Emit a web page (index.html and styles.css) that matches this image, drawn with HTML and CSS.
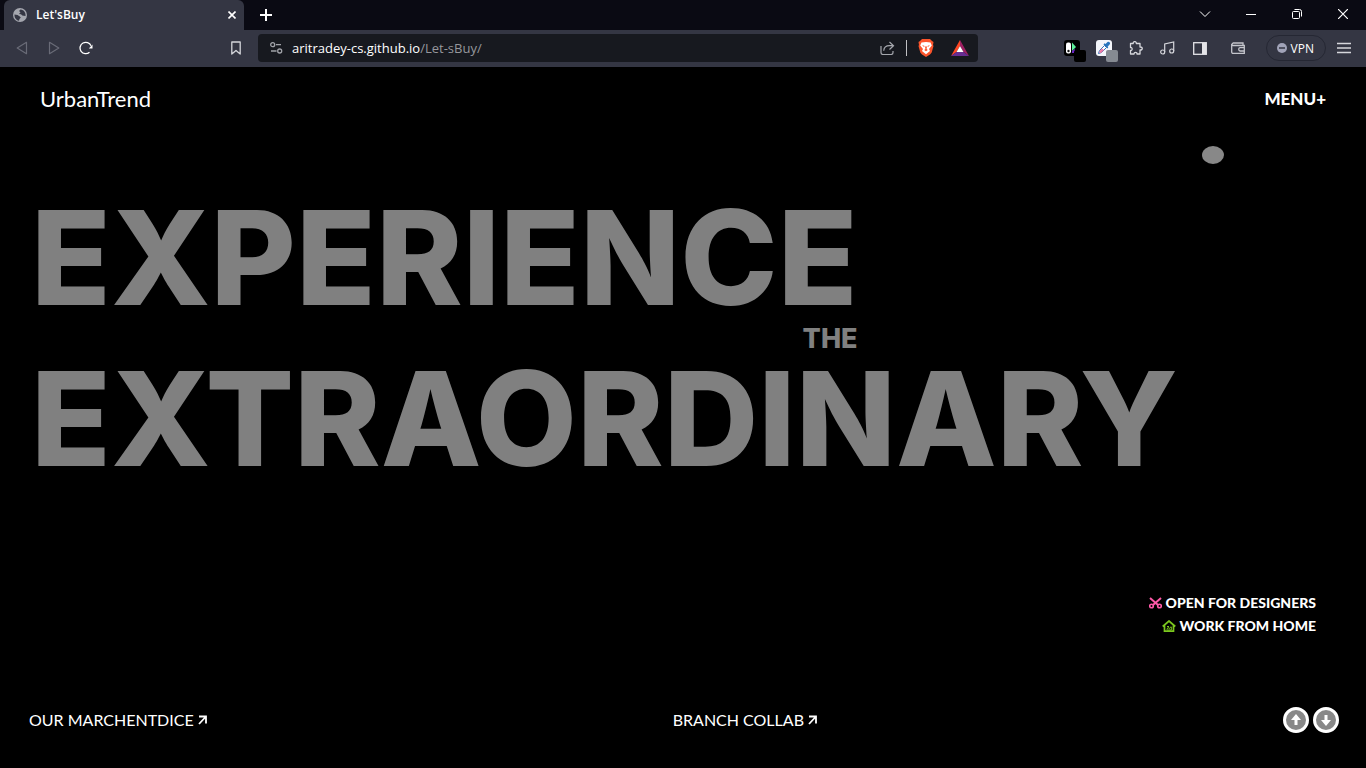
FILE: index.html
```html
<!DOCTYPE html>
<html lang="en">
<head>
<meta charset="utf-8">
<title>Let'sBuy</title>
<link rel="stylesheet" href="styles.css">
</head>
<body>
<div class="window">
  <header class="tabstrip">
    <div class="tab">
      <svg class="icon" width="14" height="14" viewBox="0 0 14 14"><circle cx="7" cy="7" r="7" fill="#a4a6ae"/><path d="M1.500 6.500 4.500 7l2 1.200 1.300 1.300L6.500 11l-.5 1.700C3 12.300 1.300 9.500 1.500 6.500zM7.500 1.500 6 3l1.500 1.300L6 6l2 .3 1.300 1.200L12.500 8c.5-3-1.500-6.300-5-6.500z" fill="#343643"/></svg>
      <span class="tab-title">Let'sBuy</span>
      <button class="icon-btn" aria-label="Close tab"><svg width="8" height="8" viewBox="0 0 8 8"><path d="M.5.5l7 7M7.500.5l-7 7" stroke="#fff" stroke-width="1.600"/></svg></button>
    </div>
    <button class="icon-btn new-tab" aria-label="New tab"><svg width="12" height="12" viewBox="0 0 12 12"><path d="M6 0v12M0 6h12" stroke="#fff" stroke-width="2"/></svg></button>
    <div class="window-controls">
      <button class="icon-btn" aria-label="Search tabs"><svg width="12" height="8" viewBox="0 0 12 8"><path d="M1 1.500l5 5 5-5" fill="none" stroke="#fff"/></svg></button>
      <button class="icon-btn" aria-label="Minimize"><svg width="10" height="10" viewBox="0 0 10 10"><path d="M0 5.500h10" stroke="#fff"/></svg></button>
      <button class="icon-btn" aria-label="Restore"><svg width="10" height="10" viewBox="0 0 10 10" fill="none" stroke="#fff"><rect x=".5" y="2.500" width="7" height="7" rx="1"/><path d="M2.500.5H7.500a2 2 0 0 1 2 2V7.500"/></svg></button>
      <button class="icon-btn" aria-label="Close"><svg width="10" height="10" viewBox="0 0 10 10"><path d="M0 0l10 10M10 0L0 10" stroke="#fff" stroke-width="1.200"/></svg></button>
    </div>
  </header>

  <nav class="toolbar" aria-label="Browser">
    <div class="nav-buttons">
      <button class="icon-btn" aria-label="Back"><svg width="12" height="14" viewBox="0 0 12 14"><path d="M10.500 1.300v11.400L1.200 7z" fill="none" stroke="#696b77" stroke-width="1.200" stroke-linejoin="round"/></svg></button>
      <button class="icon-btn" aria-label="Forward"><svg width="12" height="14" viewBox="0 0 12 14"><path d="M1.500 1.300v11.400L10.800 7z" fill="none" stroke="#696b77" stroke-width="1.200" stroke-linejoin="round"/></svg></button>
      <button class="icon-btn" aria-label="Reload"><svg width="14" height="14" viewBox="0 0 14 14"><path d="M10.500 11.300A5.700 5.700 0 1 1 12 4.800" fill="none" stroke="#fff" stroke-width="1.300"/><path d="M13.500 3.500v4h-3.700z" fill="#fff"/></svg></button>
      <button class="icon-btn bookmark" aria-label="Bookmark"><svg width="10" height="14" viewBox="0 0 10 14"><path d="M.8 1h8.400v12L5 9.500.8 13z" fill="none" stroke="#d4d5da" stroke-width="1.300" stroke-linejoin="round"/></svg></button>
    </div>
    <div class="address">
      <svg class="icon" width="13" height="12" viewBox="0 0 13 12" fill="none" stroke="#a0a2a8" stroke-width="1.300"><circle cx="2.700" cy="2.700" r="2"/><path d="M6 2.700h5M1 9h5.500"/><circle cx="9.700" cy="9" r="2"/></svg>
      <span class="url">aritradey-cs.github.io<span class="path">/Let-sBuy/</span></span>
      <button class="icon-btn share" aria-label="Share"><svg width="15" height="14" viewBox="0 0 15 14" fill="none" stroke="#a5a7ad" stroke-width="1.200"><path d="M1 5v6.500a2 2 0 0 0 2 2h8a2 2 0 0 0 2-2V10M9.500 1l4 3.700-4 3.800M13.500 4.700H9.500C6 4.700 4 6.500 3.700 9.700"/></svg></button>
      <span class="rule"></span>
      <button class="icon-btn" aria-label="Brave Shields"><svg width="16" height="18" viewBox="0 0 16 18"><path d="M4 0h8l2 2 1.500 1-.5 3 .5 1-1.800 6.500L12 15.500 8 18l-4-2.500-1.700-2L.5 7 1 6 .5 3 2 2z" fill="#fb542b"/><path d="M3.500 3.500 8 3l4.500.5 1.300 3L11 10l1 2-4 3.300L4 12l1-2-2.800-3.500z" fill="#fff"/><path d="M4 6l2.700 1-.7 1zm8 0L9.300 7l.7 1zM7 7.500h2L8.600 10 9.800 11 8 12.300 6.200 11 7.400 10z" fill="#fb542b"/></svg></button>
      <button class="icon-btn" aria-label="Rewards"><svg width="18" height="16" viewBox="0 0 18 16"><path d="M9 0v6L5.500 12 0 16z" fill="#ff4724"/><path d="M9 0l9 16-5.500-4L9 6z" fill="#9e1f63"/><path d="M0 16l5.500-4h7l5.500 4z" fill="#662d91"/><path d="M9 6l3.500 6h-7z" fill="#fff"/></svg></button>
    </div>
    <div class="extensions">
      <button class="icon-btn badge-holder" aria-label="Dark mode extension"><svg width="16" height="16" viewBox="0 0 16 16"><rect width="16" height="16" rx="3" fill="#000"/><rect x="2" y="2.500" width="5" height="11" rx="2" fill="#fff"/><circle cx="4.500" cy="11" r="1.200" fill="#111"/><path d="M8 2.500L12 7l-4 4z" fill="#5df09a"/><path d="M8 11l3-2v4H8z" fill="#6b24c5"/></svg><span class="badge"></span></button>
      <button class="icon-btn badge-holder" aria-label="Color picker extension"><svg width="16" height="16" viewBox="0 0 16 16"><rect width="16" height="16" rx="3" fill="#f3f5fa"/><path d="M2.500 13.500l1-3 5-5 2 2-5 5z" fill="#fff" stroke="#3975b7"/><path d="M3 13l1-2.500 2-2 2 1.500-3 3z" fill="#ee7aa5"/><path d="M7.500 4.500l4 4 .8-1-.7-.8L14 4c.5-1.500-1-3-2.500-2L9.500 4l-1-.7z" fill="#2774bd"/></svg><span class="badge gray"></span></button>
      <button class="icon-btn" aria-label="Extensions"><svg width="14" height="14" viewBox="0 0 14 14"><path d="M1.500 2.500h2.700c-.5-2.500 3.600-2.500 3.100 0H11V6c3-.3 3 3.300 0 3v4H8c.3-2.300-3-2.300-3 0H1.500V9.500c2.200.3 2.200-3.300 0-3z" fill="none" stroke="#d6d7dc" stroke-width="1.300" stroke-linejoin="round"/></svg></button>
      <button class="icon-btn" aria-label="Media"><svg width="15" height="14" viewBox="0 0 15 14" fill="none" stroke="#d6d7dc" stroke-width="1.200"><circle cx="2.700" cy="11" r="2"/><circle cx="11.700" cy="10" r="2"/><path d="M4.700 11V3l9-2v9"/></svg></button>
      <button class="icon-btn" aria-label="Sidebar"><svg width="14" height="13" viewBox="0 0 14 13"><rect x=".7" y=".7" width="12.600" height="11.600" fill="none" stroke="#e4e4e8" stroke-width="1.300"/><path d="M9 1h4v11H9z" fill="#e4e4e8"/></svg></button>
      <button class="icon-btn wallet" aria-label="Wallet"><svg width="14" height="12" viewBox="0 0 14 12" fill="none" stroke="#c4c5cc" stroke-width="1.300"><path d="M12 3.500V1H2a1.300 1.300 0 0 0 0 2.500h11.300v7.800H2A1.300 1.300 0 0 1 .7 10V2M13 5.700H9a1.700 1.700 0 0 0 0 3.300h4"/></svg></button>
      <button class="vpn"><svg width="10" height="10" viewBox="0 0 10 10"><circle cx="5" cy="5" r="5" fill="#a1a3b8"/><path d="M2 5h6" stroke="#343643" stroke-width="1.500"/></svg>VPN</button>
      <button class="icon-btn" aria-label="Browser menu"><svg width="14" height="12" viewBox="0 0 14 12"><path d="M0 1.500h14M0 6h14M0 10.500h14" stroke="#d6d7dc" stroke-width="1.300"/></svg></button>
    </div>
  </nav>

  <main class="page">
    <nav class="site-nav">
      <a class="brand" href="#">UrbanTrend</a>
      <button class="menu">MENU+</button>
    </nav>
    <span class="cursor"></span>
    <h1 class="hero">
      <span class="first">
        <span class="big">EXPERIENCE</span>
        <span class="small">THE</span>
      </span>
      <span class="big">EXTRAORDINARY</span>
    </h1>
    <div class="notes">
      <p class="note"><svg width="13" height="12" viewBox="0 0 13 12" fill="none" stroke="#ff5aa8"><circle cx="2.500" cy="9" r="1.800" stroke-width="1.600"/><circle cx="10.500" cy="9" r="1.800" stroke-width="1.600"/><path d="M1 1l8 7M12 1L4 8" stroke-width="2"/></svg>OPEN FOR DESIGNERS</p>
      <p class="note"><svg width="14" height="12" viewBox="0 0 14 12" fill="none" stroke="#7bc81e"><path d="M.7 6.500L7 1l6.300 5.500M2.500 5.500v5.700h9V5.500" stroke-width="1.700"/><path d="M4.700 9.500L6 7.500l1.500 1L9 6.500M5 10h4M5 6.500h2M9.300 7v3" stroke-width="1"/></svg>WORK FROM HOME</p>
    </div>
    <footer class="bottom">
      <a class="link" href="#">OUR MARCHENTDICE<svg width="9" height="10" viewBox="0 0 9 10"><path d="M1 1.500h7v7M8 1.500L1 9" fill="none" stroke="#fff" stroke-width="1.800"/></svg></a>
      <a class="link" href="#">BRANCH COLLAB<svg width="9" height="10" viewBox="0 0 9 10"><path d="M1 1.500h7v7M8 1.500L1 9" fill="none" stroke="#fff" stroke-width="1.800"/></svg></a>
      <div class="arrows">
        <button class="round" aria-label="Up"><svg width="12" height="12" viewBox="0 0 12 12"><path d="M6 0l5 6H7.500v5h-3V6H1z" fill="#fff"/></svg></button>
        <button class="round" aria-label="Down"><svg width="12" height="12" viewBox="0 0 12 12"><path d="M6 12L1 6h3.500V1h3v5H11z" fill="#fff"/></svg></button>
      </div>
    </footer>
  </main>
</div>
</body>
</html>
```
FILE: styles.css
```css
* { box-sizing: border-box; }

body {
  margin: 0;
  background: #000;
  color: #fff;
  font-family: Lato, sans-serif;
}

button {
  padding: 0;
  border: 0;
  background: none;
  color: inherit;
  font: inherit;
}

svg { display: block; flex: none; }
a { color: inherit; text-decoration: none; }

.window {
  display: flex;
  flex-direction: column;
  min-height: 100vh;
}

.icon-btn {
  display: flex;
  align-items: center;
  justify-content: center;
}

/* Browser tabs */
.tabstrip {
  display: flex;
  align-items: stretch;
  height: 30px;
  padding-left: 4px;
  background: #0a0a13;
}

.tab {
  display: flex;
  align-items: center;
  gap: 9px;
  width: 240px;
  padding: 0 8px 0 9px;
  border-radius: 6px 6px 0 0;
  background: #343643;
}

.tab-title {
  flex: 1;
  font: 600 12px/16px "Open Sans", sans-serif;
}

.new-tab { width: 44px; }

.window-controls {
  display: flex;
  margin-left: auto;
  padding-bottom: 2px;
}

.window-controls .icon-btn { width: 46px; }

/* Browser toolbar */
.toolbar {
  display: flex;
  align-items: center;
  height: 37px;
  padding-bottom: 1px;
  background: #343643;
  font-family: "Open Sans", sans-serif;
}

.nav-buttons {
  display: flex;
  width: 258px;
  padding-left: 6px;
}

.nav-buttons .icon-btn { width: 32px; }
.nav-buttons .bookmark { margin: 0 6px 0 auto; }

.address {
  display: flex;
  flex: 0 1 720px;
  align-items: center;
  height: 28px;
  padding: 0 9px 0 12px;
  border-radius: 4px;
  background: #17191f;
}

.url {
  margin-left: 9px;
  font-size: 13px;
  line-height: 18px;
  white-space: nowrap;
}

.path { color: #96979c; }
.share { margin-left: auto; }

.rule {
  width: 1px;
  height: 16px;
  margin: 0 11px;
  background: #c0c0c4;
}

.address .rule + .icon-btn { margin-right: 17px; }

.extensions {
  display: flex;
  align-items: center;
  margin-left: auto;
  padding-right: 6px;
}

.extensions .icon-btn { width: 32px; }
.extensions .wallet { width: 44px; }

.badge-holder { position: relative; }

.badge {
  position: absolute;
  left: 18px;
  top: 10px;
  width: 12px;
  height: 12px;
  border-radius: 2px;
  background: #000;
}

.extensions .badge.gray { background: #858a92; }

.vpn {
  display: flex;
  align-items: center;
  gap: 4px;
  height: 26px;
  margin: 0 2px 0 6px;
  padding: 0 11px 0 10px;
  border: 1px solid #252733;
  border-radius: 13px;
  font-size: 12px;
}

/* Landing page */
.page {
  position: relative;
  display: flex;
  flex: 1;
  flex-direction: column;
}

.site-nav {
  display: flex;
  align-items: center;
  justify-content: space-between;
  padding: 20px 40px;
  line-height: 24px;
}

.brand { font-size: 22px; }
.menu { font-size: 17px; font-weight: 900; }

.cursor {
  position: absolute;
  top: 79px;
  right: 142px;
  width: 22px;
  height: 18px;
  border-radius: 50%;
  background: #888;
}

.hero {
  display: flex;
  flex-direction: column;
  align-items: flex-start;
  margin: 0;
  padding: 61px 31px 0;
  color: gray;
  font-family: Inter, sans-serif;
  font-weight: 800;
}

.first {
  display: flex;
  flex-direction: column;
  align-items: flex-end;
}

.big { font-size: 131px; line-height: 132px; }
.small { font-size: 27px; line-height: 29px; }

.notes {
  display: flex;
  flex-direction: column;
  align-items: flex-end;
  margin-top: auto;
  padding: 0 50px;
  font-size: 14px;
  font-weight: 900;
  line-height: 23px;
}

.note {
  display: flex;
  align-items: center;
  gap: 4px;
  margin: 0;
}

.bottom {
  display: flex;
  align-items: center;
  justify-content: space-between;
  padding: 70px 27px 35px 29px;
}

.link {
  display: flex;
  align-items: center;
  gap: 4px;
  font-size: 16px;
  line-height: 26px;
}

.arrows { display: flex; gap: 4px; }

.round {
  display: flex;
  align-items: center;
  justify-content: center;
  width: 26px;
  height: 26px;
  border: 3px solid #fff;
  border-radius: 50%;
  background: #888;
}
```
